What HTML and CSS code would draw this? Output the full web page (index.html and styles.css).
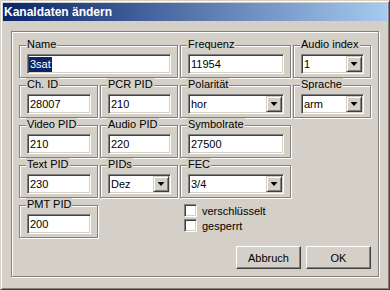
FILE: index.html
```html
<!DOCTYPE html>
<html lang="de">
<head>
    <meta charset="UTF-8">
    <title>Kanaldaten ändern</title>
    <link rel="stylesheet" href="styles.css">
</head>
<body>
  <div class="window">
    <div class="titlebar">Kanaldaten ändern</div>

    <div class="panel">
      <div class="grid">
        <!-- Zeile 1 -->
        <div class="group span2">
          <span class="label">Name</span>
          <div class="edit"><span class="sel">3sat</span></div>
        </div>
        <div class="group">
          <span class="label">Frequenz</span>
          <div class="edit">11954</div>
        </div>
        <div class="group">
          <span class="label">Audio index</span>
          <div class="edit combo">1<span class="drop"></span></div>
        </div>

        <!-- Zeile 2 -->
        <div class="group first">
          <span class="label">Ch. ID</span>
          <div class="edit">28007</div>
        </div>
        <div class="group">
          <span class="label">PCR PID</span>
          <div class="edit">210</div>
        </div>
        <div class="group">
          <span class="label">Polarität</span>
          <div class="edit combo">hor<span class="drop"></span></div>
        </div>
        <div class="group">
          <span class="label">Sprache</span>
          <div class="edit combo">arm<span class="drop"></span></div>
        </div>

        <!-- Zeile 3 -->
        <div class="group first">
          <span class="label">Video PID</span>
          <div class="edit">210</div>
        </div>
        <div class="group">
          <span class="label">Audio PID</span>
          <div class="edit">220</div>
        </div>
        <div class="group">
          <span class="label">Symbolrate</span>
          <div class="edit">27500</div>
        </div>

        <!-- Zeile 4 -->
        <div class="group first">
          <span class="label">Text PID</span>
          <div class="edit">230</div>
        </div>
        <div class="group">
          <span class="label">PIDs</span>
          <div class="edit combo">Dez<span class="drop"></span></div>
        </div>
        <div class="group">
          <span class="label">FEC</span>
          <div class="edit combo">3/4<span class="drop"></span></div>
        </div>

        <!-- Zeile 5 -->
        <div class="group first">
          <span class="label">PMT PID</span>
          <div class="edit">200</div>
        </div>
        <div class="checks">
          <div class="check"><span class="box"></span>verschlüsselt</div>
          <div class="check"><span class="box"></span>gesperrt</div>
        </div>
      </div>

      <div class="buttons">
        <div class="btn">Abbruch</div>
        <div class="btn">OK</div>
      </div>
    </div>
  </div>
</body>
</html>
```

FILE: styles.css
```css
body { margin: 0; background: #d4d0c8; font-family: "Liberation Sans", Arial, sans-serif; font-size: 11px; color: #000; }

.window { width: 390px; height: 290px; box-sizing: border-box; padding: 2px; background: #d4d0c8; border: 1px solid; border-color: #d4d0c8 #404040 #404040 #d4d0c8; box-shadow: inset 1px 1px #fff, inset -1px -1px #808080; display: flex; flex-direction: column; }
.titlebar { height: 18px; line-height: 18px; padding-left: 1px; background: linear-gradient(to right, #0a246a, #a6caf0); color: #fff; font-weight: bold; font-size: 12px; }

/* geätzter Rahmen */
.panel { margin: 10px 8px 0; padding: 13px 7px 7px; border: 1px solid #808080; box-shadow: inset 1px 1px #fff, 1px 1px #fff; }
.grid { display: grid; grid-template-columns: 79px 78px 111px 78px; grid-auto-rows: 33px; gap: 7px 2px; }
.group { position: relative; padding: 8px 6px 0 7px; border: 1px solid #808080; box-shadow: inset 1px 1px #fff, 1px 1px #fff; }
.span2 { grid-column: span 2; }
.first { grid-column: 1; }
.label { position: absolute; top: -8px; left: 6px; padding: 0 1px; line-height: 13px; background: #d4d0c8; white-space: nowrap; }

.edit { height: 20px; box-sizing: border-box; padding: 1px 1px 1px 2px; display: flex; align-items: center; line-height: 16px; background: #fff; border: 1px solid; border-color: #808080 #fff #fff #808080; box-shadow: inset 1px 1px #404040, inset -1px -1px #d4d0c8; }
.sel { height: 15px; line-height: 15px; padding: 0 1px; margin-left: -1px; background: #0a246a; color: #fff; }
.drop { width: 16px; height: 16px; box-sizing: border-box; margin-left: auto; display: flex; align-items: center; justify-content: center; background: #d4d0c8; border: 1px solid; border-color: #d4d0c8 #404040 #404040 #d4d0c8; box-shadow: inset 1px 1px #fff, inset -1px -1px #808080; }
.drop::after { content: ""; width: 7px; height: 4px; background: #000; clip-path: polygon(0 0, 100% 0, 50% 100%); }

.checks { grid-column: 3; display: flex; flex-direction: column; gap: 2px; margin: -1px 0 0 4px; }
.check { display: flex; align-items: center; gap: 5px; height: 13px; }
.box { width: 13px; height: 13px; box-sizing: border-box; background: #fff; border: 1px solid; border-color: #808080 #fff #fff #808080; box-shadow: inset 1px 1px #404040, inset -1px -1px #d4d0c8; }

.buttons { display: flex; justify-content: flex-end; gap: 5px; margin-top: 8px; }
.btn { width: 65px; height: 23px; box-sizing: border-box; display: flex; align-items: center; justify-content: center; border: 1px solid; border-color: #fff #404040 #404040 #fff; box-shadow: inset -1px -1px #808080; }
```
